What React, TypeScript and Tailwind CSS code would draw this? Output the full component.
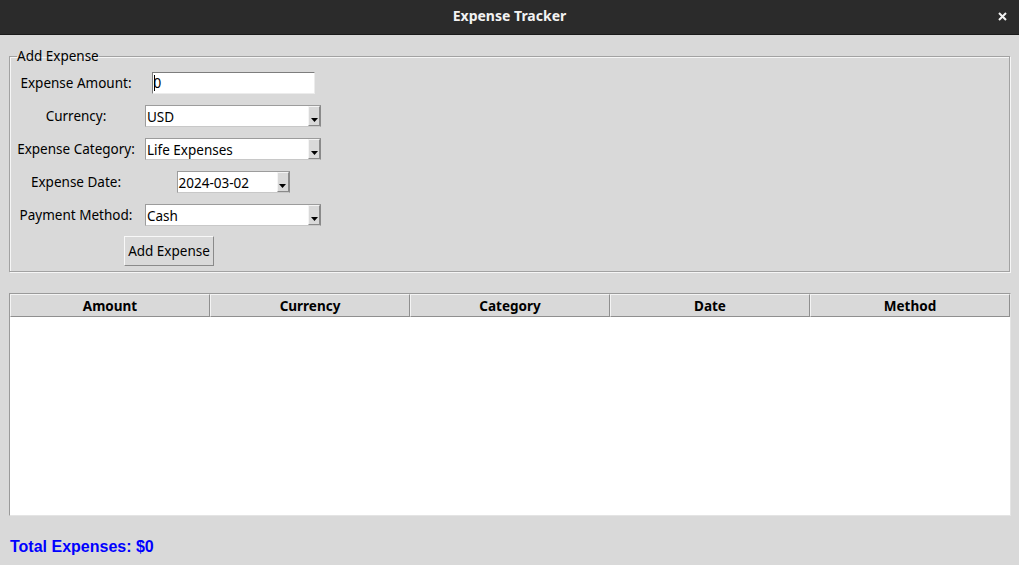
const headers = ["Amount", "Currency", "Category", "Date", "Method"];

function Arrow() {
  return (
    <svg width="7" height="4" viewBox="0 0 7 4" className="block">
      <path d="M0 0H7L3.5 4Z" fill="#000" />
    </svg>
  );
}

function Combo({ value, width }: { value: string; width: string }) {
  return (
    <div
      className={`justify-self-center flex h-[22px] bg-white border border-t-[#9c9c9c] border-l-[#9c9c9c] border-b-[#c8c8c8] border-r-[#8a8a8a] ${width}`}
    >
      <span className="flex-1 pl-[1px] pt-[1px] leading-[20px] whitespace-nowrap">{value}</span>
      <span className="w-[12px] flex items-end justify-center pb-[3px] bg-[#d9d9d9] border-t border-l border-t-[#f4f4f4] border-l-[#f4f4f4] border-b border-r border-b-[#8a8a8a] border-r-[#8a8a8a]">
        <Arrow />
      </span>
    </div>
  );
}

function Label({ children }: { children: string }) {
  return <span className="justify-self-center whitespace-nowrap pt-[1px]">{children}</span>;
}

export default function App() {
  return (
    <div className="w-[1019px] h-[565px] overflow-hidden bg-[#d9d9d9] text-black text-[13.5px] font-['Noto_Sans',sans-serif]">
      {/* title bar */}
      <div className="relative flex h-[35px] items-center justify-center bg-[#2b2b2b] border-b border-[#1a1a1a]">
        <span className="text-[14px] font-bold text-[#f2f2f2] pb-[3px]">Expense Tracker</span>
        <svg
          width="9"
          height="9"
          viewBox="0 0 9 9"
          className="absolute right-[12px] top-[12px]"
        >
          <path d="M1 1L8 8M8 1L1 8" stroke="#f2f2f2" strokeWidth="2" />
        </svg>
      </div>

      <div className="px-[9px]">
        <fieldset className="mt-[12px] border border-[#a2a2a2] shadow-[inset_1px_1px_0_#f6f6f6,1px_1px_0_#f6f6f6] pl-[2px] pt-[1px]">
          <legend className="ml-[5px] leading-[18px]">Add Expense</legend>
          <div className="grid grid-cols-[128px_186px] grid-rows-[33px_33px_33px_33px_33px_40px] items-center">
            <Label>Expense Amount:</Label>
            <div className="justify-self-center flex items-center w-[163px] h-[22px] bg-white border border-t-[#7d7d7d] border-l-[#7d7d7d] border-b-[#ececec] border-r-[#ececec] pl-[1px]">
              <span className="w-px h-[16px] bg-black" />
              <span className="-ml-[1px] leading-[20px]">0</span>
            </div>

            <Label>Currency:</Label>
            <Combo value="USD" width="w-[176px]" />

            <Label>Expense Category:</Label>
            <Combo value="Life Expenses" width="w-[176px]" />

            <Label>Expense Date:</Label>
            <Combo value="2024-03-02" width="w-[113px]" />

            <Label>Payment Method:</Label>
            <Combo value="Cash" width="w-[176px]" />

            <button className="col-span-2 justify-self-center w-[90px] h-[30px] pt-[1px] bg-[#d9d9d9] border border-t-[#f8f8f8] border-l-[#f8f8f8] border-b-[#8a8a8a] border-r-[#8a8a8a]">
              Add Expense
            </button>
          </div>
        </fieldset>

        {/* table */}
        <div className="mt-[21px] -mr-px border border-t-[#9a9a9a] border-l-[#9a9a9a] border-b-[#e4e4e4] border-r-[#e4e4e4]">
          <div className="grid grid-cols-5 h-[21px]">
            {headers.map((h) => (
              <div
                key={h}
                className="flex items-center justify-center pt-[1px] font-bold bg-[#d9d9d9] border border-t-[#f4f4f4] border-l-[#f4f4f4] border-b-[#8f8f8f] border-r-[#8f8f8f]"
              >
                {h}
              </div>
            ))}
          </div>
          <div className="h-[200px] bg-white" />
        </div>

        <div className="mt-[22px] pl-[1px] leading-[18px] text-[16px] font-bold text-[#0000ff] font-['Liberation_Sans',Arial,sans-serif]">
          Total Expenses: $0
        </div>
      </div>
    </div>
  );
}
